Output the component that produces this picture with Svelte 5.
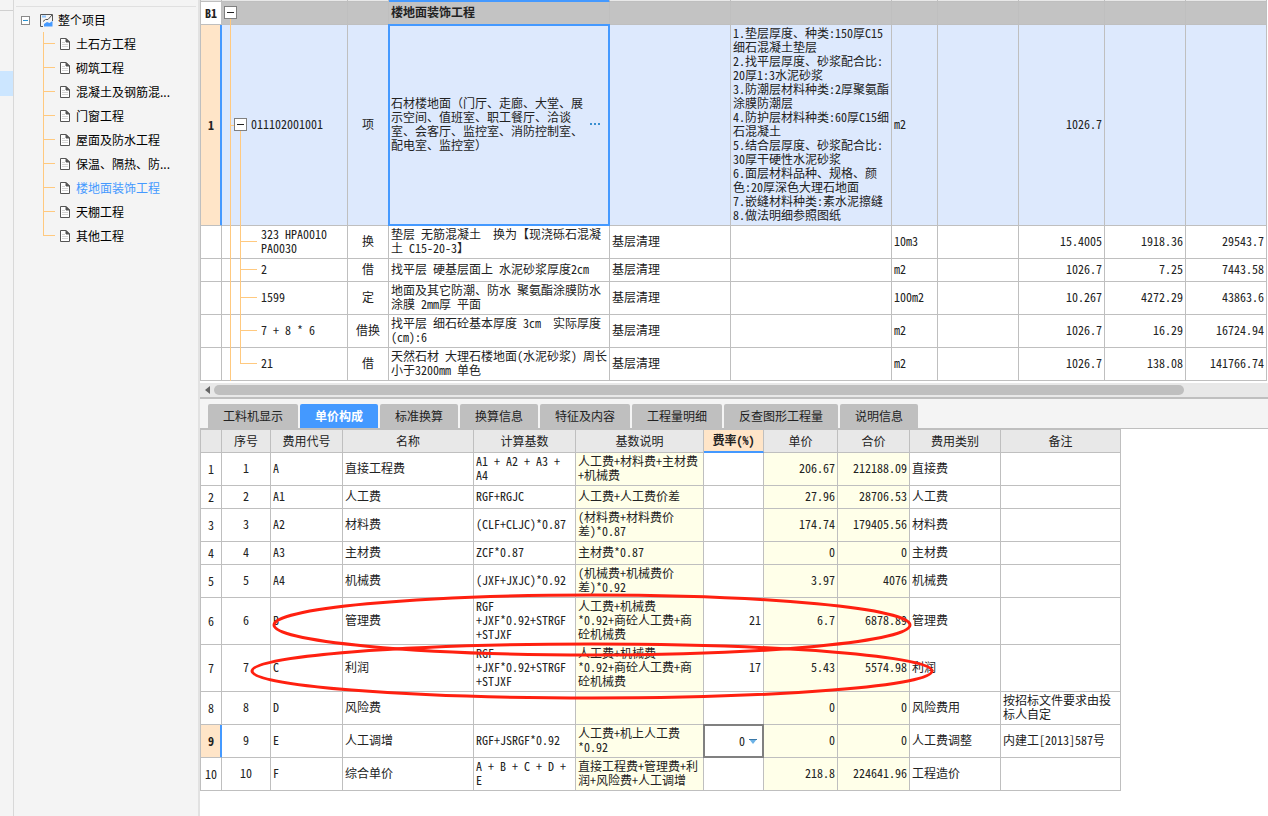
<script lang="ts">
  const sections = [
    '土石方工程',
    '砌筑工程',
    '混凝土及钢筋混...',
    '门窗工程',
    '屋面及防水工程',
    '保温、隔热、防...',
    '楼地面装饰工程',
    '天棚工程',
    '其他工程',
  ];
  let section = $state('楼地面装饰工程');

  const tabs = [
    '工料机显示',
    '单价构成',
    '标准换算',
    '换算信息',
    '特征及内容',
    '工程量明细',
    '反查图形工程量',
    '说明信息',
  ];
  let tab = $state('单价构成');

  const itemName =
    '石材楼地面（门厅、走廊、大堂、展\n示空间、值班室、职工餐厅、洽谈\n室、会客厅、监控室、消防控制室、\n配电室、监控室）';

  const features = [
    '1.垫层厚度、种类:150厚C15',
    '细石混凝土垫层',
    '2.找平层厚度、砂浆配合比:',
    '20厚1:3水泥砂浆',
    '3.防潮层材料种类:2厚聚氨酯',
    '涂膜防潮层',
    '4.防护层材料种类:60厚C15细',
    '石混凝土',
    '5.结合层厚度、砂浆配合比:',
    '30厚干硬性水泥砂浆',
    '6.面层材料品种、规格、颜',
    '色:20厚深色大理石地面',
    '7.嵌缝材料种类:素水泥擦缝',
    '8.做法明细参照图纸',
  ].join('\n');

  const quotas = [
    { code: '323 HPA0010\nPA0030', type: '换', name: '垫层 无筋混凝土  换为【现浇砾石混凝\n土 C15-20-3】', unit: '10m3', qty: '15.4005', price: '1918.36', total: '29543.7' },
    { code: '2', type: '借', name: '找平层 硬基层面上 水泥砂浆厚度2cm', unit: 'm2', qty: '1026.7', price: '7.25', total: '7443.58' },
    { code: '1599', type: '定', name: '地面及其它防潮、防水 聚氨酯涂膜防水\n涂膜 2mm厚 平面', unit: '100m2', qty: '10.267', price: '4272.29', total: '43863.6' },
    { code: '7 + 8 * 6', type: '借换', name: '找平层 细石砼基本厚度 3cm  实际厚度\n(cm):6', unit: 'm2', qty: '1026.7', price: '16.29', total: '16724.94' },
    { code: '21', type: '借', name: '天然石材 大理石楼地面(水泥砂浆) 周长\n小于3200mm 单色', unit: 'm2', qty: '1026.7', price: '138.08', total: '141766.74' },
  ];

  const fees = [
    { code: 'A', name: '直接工程费', base: 'A1 + A2 + A3 +\nA4', desc: '人工费+材料费+主材费\n+机械费', rate: '', price: '206.67', total: '212188.09', kind: '直接费', note: '' },
    { code: 'A1', name: '人工费', base: 'RGF+RGJC', desc: '人工费+人工费价差', rate: '', price: '27.96', total: '28706.53', kind: '人工费', note: '' },
    { code: 'A2', name: '材料费', base: '(CLF+CLJC)*0.87', desc: '(材料费+材料费价\n差)*0.87', rate: '', price: '174.74', total: '179405.56', kind: '材料费', note: '' },
    { code: 'A3', name: '主材费', base: 'ZCF*0.87', desc: '主材费*0.87', rate: '', price: '0', total: '0', kind: '主材费', note: '' },
    { code: 'A4', name: '机械费', base: '(JXF+JXJC)*0.92', desc: '(机械费+机械费价\n差)*0.92', rate: '', price: '3.97', total: '4076', kind: '机械费', note: '' },
    { code: 'B', name: '管理费', base: 'RGF\n+JXF*0.92+STRGF\n+STJXF', desc: '人工费+机械费\n*0.92+商砼人工费+商\n砼机械费', rate: '21', price: '6.7', total: '6878.89', kind: '管理费', note: '' },
    { code: 'C', name: '利润', base: 'RGF\n+JXF*0.92+STRGF\n+STJXF', desc: '人工费+机械费\n*0.92+商砼人工费+商\n砼机械费', rate: '17', price: '5.43', total: '5574.98', kind: '利润', note: '' },
    { code: 'D', name: '风险费', base: '', desc: '', rate: '', price: '0', total: '0', kind: '风险费用', note: '按招标文件要求由投\n标人自定', tall: true },
    { code: 'E', name: '人工调增', base: 'RGF+JSRGF*0.92', desc: '人工费+机上人工费\n*0.92', rate: '0', price: '0', total: '0', kind: '人工费调整', note: '内建工[2013]587号' },
    { code: 'F', name: '综合单价', base: 'A + B + C + D +\nE', desc: '直接工程费+管理费+利\n润+风险费+人工调增', rate: '', price: '218.8', total: '224641.96', kind: '工程造价', note: '' },
  ];
  const editing = 8;
</script>

<div class="app">
  <div class="rail">
    <div class="rail-head"></div>
    <div class="rail-active"></div>
  </div>

  <nav class="sidebar">
    <div class="root">
      <button class="fold" aria-label="折叠">
        <svg width="9" height="9" viewBox="0 0 9 9">
          <rect x="0.5" y="0.5" width="8" height="8" fill="#fff" stroke="#8a8a8a" />
          <path d="M2 4.5h5" stroke="#2a92d0" />
        </svg>
      </button>
      <svg class="project-icon" width="13" height="13" viewBox="0 0 13 13">
        <path d="M12.5 7V0.5H0.5V12.5H3" fill="none" stroke="#555" />
        <path d="M2 2.5h4" stroke="#8cc4ff" stroke-width="2" />
        <path d="M3 7.5L5.5 5.5H8L12 1" fill="none" stroke="#555" />
        <path d="M4 12.5V10l3-2 2.5 1L12.5 7v5.5z" fill="#4499ff" />
      </svg>
      <span>整个项目</span>
    </div>
    <ul>
      {#each sections as name}
        <li>
          <a href="#section" class:current={name === section} onclick={() => (section = name)}>
            <svg width="10" height="12" viewBox="0 0 10 12">
              <path d="M0.5 0.5H6L9.5 4V11.5H0.5Z" fill="#fff" stroke="#555" />
              <path d="M6 0.5V4H9.5Z" fill="#555" stroke="#555" />
              <path d="M2 4.5h3M2 6.5h6M2 8.5h6" stroke="#d4d4d4" />
            </svg>
            {name}
          </a>
        </li>
      {/each}
    </ul>
  </nav>

  <main>
    <table class="bill">
      <colgroup>
        <col class="w-no" /><col class="w-code" /><col class="w-type" /><col class="w-name" />
        <col class="w-spec" /><col /><col class="w-unit" /><col class="w-num" />
        <col class="w-qty" /><col class="w-num" /><col class="w-num" />
      </colgroup>
      <tbody>
        <tr class="edge">
          {#each Array(11) as _, i}
            <td class:active={i === 3}></td>
          {/each}
        </tr>
        <tr class="chapter">
          <th scope="row">B1</th>
          <td class="tree">
            <i class="trunk from-box"></i>
            <button class="toggle" aria-label="折叠章节"></button>
          </td>
          <td></td>
          <td class="strong">楼地面装饰工程</td>
          <td></td><td></td><td></td><td></td><td></td><td></td><td></td>
        </tr>
        <tr class="item">
          <th scope="row" class="selected">1</th>
          <td class="tree">
            <i class="trunk"></i>
            <i class="stub"></i>
            <i class="trunk inner from-middle"></i>
            <span class="item-code">
              <button class="toggle" aria-label="折叠清单"></button>011102001001
            </span>
          </td>
          <td class="center">项</td>
          <td class="focused">
            <div class="focus-content">
              <span>{itemName}</span>
              <button class="more" aria-label="更多"><i></i><i></i><i></i></button>
            </div>
          </td>
          <td></td>
          <td>{features}</td>
          <td>m2</td>
          <td></td>
          <td class="num">1026.7</td>
          <td></td>
          <td></td>
        </tr>
        {#each quotas as q, i}
          <tr class:tall={q.name.includes('\n')}>
            <th scope="row"></th>
            <td class="tree quota">
              <i class="trunk"></i>
              <i class="trunk inner" class:last={i === quotas.length - 1}></i>
              <i class="branch"></i>
              {q.code}
            </td>
            <td class="center">{q.type}</td>
            <td>{q.name}</td>
            <td>基层清理</td>
            <td></td>
            <td>{q.unit}</td>
            <td></td>
            <td class="num">{q.qty}</td>
            <td class="num">{q.price}</td>
            <td class="num">{q.total}</td>
          </tr>
        {/each}
      </tbody>
    </table>

    <div class="scrollbar">
      <button class="scroll-left" aria-label="向左滚动">
        <svg width="5" height="8" viewBox="0 0 5 8"><path d="M5 0V8L0 4Z" fill="#666" /></svg>
      </button>
      <div class="track"><div class="thumb"></div></div>
    </div>

    <div class="tabs" role="tablist">
      {#each tabs as t}
        <button role="tab" aria-selected={t === tab} class:active={t === tab} onclick={() => (tab = t)}>{t}</button>
      {/each}
    </div>

    <div class="fees-wrap">
      <table class="fees">
        <colgroup>
          <col class="w-no" /><col class="f-seq" /><col class="f-code" /><col class="f-name" />
          <col class="f-base" /><col class="f-desc" /><col class="f-rate" /><col class="f-price" />
          <col class="f-total" /><col class="f-kind" /><col class="f-note" />
        </colgroup>
        <thead>
          <tr>
            <td></td>
            <th>序号</th>
            <th>费用代号</th>
            <th>名称</th>
            <th>计算基数</th>
            <th>基数说明</th>
            <th class="sorted">费率(%)</th>
            <th>单价</th>
            <th>合价</th>
            <th>费用类别</th>
            <th>备注</th>
          </tr>
        </thead>
        <tbody>
          {#each fees as f, i}
            <tr class:tall={f.tall || f.desc.includes('\n')} class:triple={f.base.startsWith('RGF\n')}>
              <th scope="row" class:selected={i === editing}>{i + 1}</th>
              <td class="center">{i + 1}</td>
              <td>{f.code}</td>
              <td>{f.name}</td>
              <td>{f.base}</td>
              <td class="calc">{f.desc}</td>
              {#if i === editing}
                <td class="edit">
                  <select aria-label="费率">
                    <option>{f.rate}</option>
                  </select>
                  <svg width="8" height="5" viewBox="0 0 8 5">
                    <path d="M0 0H8L4 5Z" fill="#6cb2e6" />
                    <path d="M0 0.5H8" stroke="#3a78a8" />
                  </svg>
                </td>
              {:else}
                <td class="num">{f.rate}</td>
              {/if}
              <td class="num calc">{f.price}</td>
              <td class="num calc">{f.total}</td>
              <td>{f.kind}</td>
              <td>{f.note}</td>
            </tr>
          {/each}
        </tbody>
      </table>
      <svg class="marks" width="921" height="362" viewBox="0 0 921 362">
        <ellipse cx="392" cy="196" rx="318" ry="30" />
        <ellipse cx="392" cy="242" rx="340" ry="27" />
      </svg>
    </div>
  </main>
</div>

<style>
  :global(body) {
    background: #fff;
  }

  .app {
    display: flex;
    min-height: 100vh;
    color: #222;
    font-family: 'Noto Sans CJK SC', sans-serif;
    font-size: 12px;
    line-height: 14px;
  }

  button,
  select {
    margin: 0;
    padding: 0;
    border: 0;
    background: none;
    color: inherit;
    font: inherit;
    font-feature-settings: inherit;
  }

  /* left side */
  .rail {
    flex: none;
    width: 13px;
    border-right: 1px solid #d8d8d8;
    background: #f4f4f4;
  }

  .rail-head {
    height: 10px;
    border-bottom: 1px solid #d0d0d0;
  }

  .rail-active {
    height: 25px;
    margin-top: 60px;
    background: #cce6ff;
  }

  .sidebar {
    flex: none;
    box-sizing: border-box;
    width: 186px;
    padding: 6px 2px 0;
    border-right: 2px solid #e2e2e2;
    background: #f4f4f4;
    color: #000;
  }

  .root {
    display: flex;
    align-items: center;
    height: 24px;
    padding: 1px 0 0 5px;
    border-top: 1px solid #e0e0e0;
  }

  .fold {
    display: flex;
  }

  .project-icon {
    margin: 0 5px 0 10px;
  }

  ul {
    margin: 0 0 0 27px;
    padding: 0;
    list-style: none;
  }

  li {
    position: relative;
    height: 24px;
  }

  li::before {
    content: '';
    position: absolute;
    left: 0;
    top: 0;
    width: 1px;
    height: 100%;
    background: #ffc97f;
  }

  li:last-child::before {
    height: 12px;
  }

  li::after {
    content: '';
    position: absolute;
    left: 0;
    top: 11px;
    width: 12px;
    height: 1px;
    background: #ffc97f;
  }

  li a {
    display: flex;
    align-items: center;
    gap: 6px;
    height: 24px;
    margin-left: 17px;
    color: inherit;
    text-decoration: none;
  }

  li a.current {
    color: #4499ff;
  }

  /* tables */
  main {
    flex: 1;
    min-width: 0;
    font-feature-settings: 'hwid' 1, 'kern' 0;
  }

  table {
    table-layout: fixed;
    border-collapse: separate;
    border-spacing: 0;
    border-left: 1px solid #bfbfbf;
  }

  th,
  td {
    box-sizing: border-box;
    height: 23px;
    padding: 0 2px 2px;
    border-right: 1px solid #bfbfbf;
    border-bottom: 1px solid #bfbfbf;
    text-align: left;
    vertical-align: middle;
    white-space: pre;
  }

  th {
    padding: 0 0 1px;
    font-weight: normal;
    text-align: center;
  }

  .tall > * {
    height: 33px;
  }

  .triple > * {
    height: 47px;
  }

  .center {
    text-align: center;
  }

  .num {
    text-align: right;
  }

  .strong {
    font-weight: bold;
  }

  th.selected {
    border-right-color: #4499ff;
    box-shadow: inset -1px 0 #4499ff;
    background: #ffe5c8;
    font-weight: bold;
  }

  .bill {
    width: calc(100% - 1px);
  }

  .w-no { width: 21px; }
  .w-code { width: 126px; }
  .w-type { width: 41px; }
  .w-name { width: 221px; }
  .w-spec { width: 121px; }
  .w-unit { width: 46px; }
  .w-num { width: 81px; }
  .w-qty { width: 86px; }

  .edge td {
    height: 2px;
    padding: 0;
    background: #e8e8e8;
    line-height: 0;
  }

  .edge .active {
    border-bottom-color: #4499ff;
    background: #4499ff;
  }

  .chapter th {
    font-weight: bold;
  }

  .chapter td {
    background: #c3c3c3;
  }

  .item > * {
    height: 201px;
  }

  .item td {
    background: #dde9fd;
  }

  .tree {
    position: relative;
    white-space: normal;
  }

  .quota {
    padding-left: 39px;
    white-space: pre-line;
  }

  .trunk,
  .stub,
  .branch {
    position: absolute;
    background: #ffc97f;
  }

  .trunk {
    left: 8px;
    top: 0;
    bottom: -1px;
    width: 1px;
  }

  .trunk.inner {
    left: 18px;
  }

  .from-box {
    top: 12px;
  }

  .from-middle {
    top: 50%;
  }

  .trunk.last {
    bottom: 50%;
  }

  .stub {
    left: 8px;
    top: 50%;
    width: 4px;
    height: 1px;
  }

  .branch {
    left: 18px;
    bottom: 50%;
    width: 17px;
    height: 1px;
  }

  .item-code {
    display: flex;
    align-items: center;
    gap: 4px;
    padding-left: 10px;
  }

  .toggle {
    position: relative;
    display: block;
    width: 13px;
    height: 13px;
    border: 1px solid #808080;
    background: #fff;
  }

  .toggle::after {
    content: '';
    position: absolute;
    left: 2px;
    top: 5px;
    width: 7px;
    height: 1px;
    background: #222;
  }

  .focused {
    position: relative;
    font-feature-settings: normal;
  }

  .focused::after {
    content: '';
    position: absolute;
    inset: -1px;
    border: 2px solid #4499ff;
    pointer-events: none;
  }

  .focus-content {
    display: flex;
    align-items: center;
    justify-content: space-between;
  }

  .more {
    display: flex;
    gap: 2px;
    padding-right: 7px;
  }

  .more i {
    width: 2px;
    height: 2px;
    background: #3a8fd0;
  }

  /* scrollbar and tabs */
  .scrollbar {
    display: flex;
    align-items: center;
    height: 14px;
    margin-top: 2px;
    border-bottom: 2px solid #bfbfbf;
    background: #e8e8e8;
  }

  .scroll-left {
    display: flex;
    padding: 0 4px 0 5px;
  }

  .track {
    flex: 1;
  }

  .thumb {
    width: 92%;
    height: 10px;
    border-radius: 5px;
    background: #bfbfbf;
  }

  .tabs {
    display: flex;
    gap: 2px;
    padding: 5px 8px 0;
    border-bottom: 1px solid #bfbfbf;
    background: #f4f4f4;
  }

  .tabs button {
    height: 24px;
    padding: 0 15px;
    border-radius: 2px 2px 0 0;
    background: #bfbfbf;
  }

  .tabs .active {
    background: #4499ff;
    color: #fff;
    font-weight: bold;
  }

  /* fee table */
  .fees-wrap {
    position: relative;
  }

  .fees {
    width: 921px;
    border-top: 1px solid #bfbfbf;
  }

  .f-seq { width: 49px; }
  .f-code { width: 72px; }
  .f-name { width: 131px; }
  .f-base { width: 102px; }
  .f-desc { width: 128px; }
  .f-rate { width: 60px; }
  .f-price { width: 74px; }
  .f-total { width: 72px; }
  .f-kind { width: 91px; }
  .f-note { width: 120px; }

  thead th,
  thead td {
    background: #e8e8e8;
  }

  thead .sorted {
    border-bottom: 2px solid #4499ff;
    background: #ffe5c8;
    font-weight: bold;
  }

  .calc {
    background: #ffffe9;
  }

  .edit {
    position: relative;
    padding: 0;
    white-space: normal;
  }

  .edit::after {
    content: '';
    position: absolute;
    inset: -1px;
    border: 2px solid #808080;
    pointer-events: none;
  }

  .edit select {
    appearance: none;
    display: block;
    width: 100%;
    height: 30px;
    padding-right: 18px;
    text-align: right;
    text-align-last: right;
  }

  .edit svg {
    position: absolute;
    right: 6px;
    top: 14px;
    pointer-events: none;
  }

  .marks {
    position: absolute;
    left: 0;
    top: 0;
    pointer-events: none;
  }

  .marks ellipse {
    fill: none;
    stroke: #ff2010;
    stroke-width: 3;
  }
</style>
